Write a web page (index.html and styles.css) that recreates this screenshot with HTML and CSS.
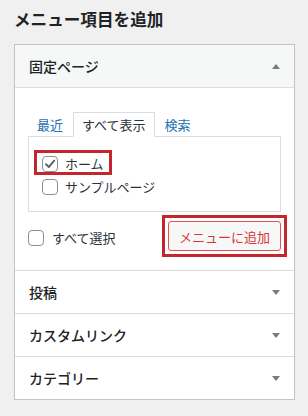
FILE: index.html
```html
<!DOCTYPE html>
<html lang="ja">
<head>
  <meta charset="UTF-8" />
  <title>メニュー項目を追加</title>
  <link rel="stylesheet" href="styles.css">
</head>
<body>
<h3 class="title">メニュー項目を追加</h3>
<div class="accordion">
  <div class="section open">
    <div class="section-head">
      <span>固定ページ</span>
      <span class="arrow up"></span>
    </div>
    <div class="section-body">
      <ul class="tabs">
        <li><a href="#">最近</a></li>
        <li class="active"><a href="#">すべて表示</a></li>
        <li><a href="#">検索</a></li>
      </ul>
      <div class="tabs-panel">
        <ul class="checklist">
          <li class="marked">
            <span class="cb checked"><svg width="14" height="14" viewBox="0 0 14 14"><path d="M3 7.3 L5.8 10 L11.2 3.6" fill="none" stroke="#5d6770" stroke-width="2" stroke-linecap="round" stroke-linejoin="round"/></svg></span>
            ホーム
          </li>
          <li>
            <span class="cb"></span>
            サンプルページ
          </li>
        </ul>
      </div>
      <div class="actions">
        <label class="select-all"><span class="cb"></span>すべて選択</label>
        <span class="marked-btn"><button class="add-btn">メニューに追加</button></span>
      </div>
    </div>
  </div>
  <div class="section">
    <div class="section-head"><span>投稿</span><span class="arrow"></span></div>
  </div>
  <div class="section">
    <div class="section-head"><span>カスタムリンク</span><span class="arrow"></span></div>
  </div>
  <div class="section">
    <div class="section-head"><span>カテゴリー</span><span class="arrow"></span></div>
  </div>
</div>
</body>
</html>
```

FILE: styles.css
```css
body {
  background: #f0f0f1;
  color: #1d2327;
  font-family: "Noto Sans CJK JP", "Noto Sans", sans-serif;
  margin: 0;
  padding: 0 13px 0 14px;
}
.title {
  margin: 0 0 13px;
  padding-top: 8px;
  font-size: 16.6px;
  line-height: 23px;
  font-weight: 700;
}
.accordion {
  background: #fff;
  border: 1px solid #c3c4c7;
  box-shadow: 0 1px 1px rgba(0,0,0,0.06);
}
.section {
  border-top: 1px solid #dcdcde;
}
.section:first-child {
  border-top: none;
}
.section-head {
  height: 42px;
  display: flex;
  align-items: center;
  justify-content: space-between;
  padding: 0 14px;
  font-size: 14px;
  font-weight: 500;
}
.open .section-head {
  background: #f6f7f7;
  border-bottom: 1px solid #dcdcde;
}
.arrow {
  width: 0;
  height: 0;
  border-left: 4px solid transparent;
  border-right: 4px solid transparent;
  border-top: 5px solid #787c82;
}
.arrow.up {
  border-top: none;
  border-bottom: 5px solid #787c82;
}
.section-body {
  padding: 24px 13px 19px;
}
.tabs {
  list-style: none;
  margin: 0 0 -1px;
  padding: 0;
  display: flex;
  gap: 1px;
  position: relative;
}
.tabs li a {
  display: block;
  padding: 0 8px;
  line-height: 23px;
  font-size: 13px;
  color: #2271b1;
  text-decoration: none;
  border: 1px solid transparent;
}
.tabs li.active a {
  color: #2c3338;
  background: #fff;
  border-color: #dcdcde;
  border-bottom-color: #fff;
}
.tabs-panel {
  border: 1px solid #dcdcde;
  padding: 15px 13px 13px;
}
.checklist {
  list-style: none;
  margin: 0;
  padding: 0;
}
.checklist li {
  height: 23px;
  display: flex;
  align-items: center;
  font-size: 13px;
  color: #2c3338;
}
.checklist li.marked {
  position: relative;
}
.checklist li.marked::after {
  content: "";
  position: absolute;
  left: -8px;
  top: -2px;
  width: 78px;
  height: 25px;
  border: 3px solid #c4262e;
  box-sizing: border-box;
}
.cb {
  width: 16px;
  height: 16px;
  box-sizing: border-box;
  border: 1px solid #8c8f94;
  border-radius: 4px;
  background: #fff;
  margin-right: 7px;
  display: flex;
  align-items: center;
  justify-content: center;
  flex: none;
}
.actions {
  display: flex;
  justify-content: space-between;
  align-items: center;
  margin-top: 9px;
}
.select-all {
  display: flex;
  align-items: center;
  font-size: 13px;
  color: #2c3338;
  margin-top: 3px;
}
.select-all .cb {
  margin-right: 8px;
}
.marked-btn {
  position: relative;
  display: flex;
}
.marked-btn::after {
  content: "";
  position: absolute;
  left: -6px;
  top: -6px;
  right: -6px;
  bottom: -6px;
  border: 3px solid #c4262e;
}
.add-btn {
  height: 30px;
  padding: 0 10px;
  font-family: inherit;
  font-size: 13px;
  color: #d63638;
  background: #f6f7f7;
  border: 1px solid #e65054;
  border-radius: 3px;
}
```
